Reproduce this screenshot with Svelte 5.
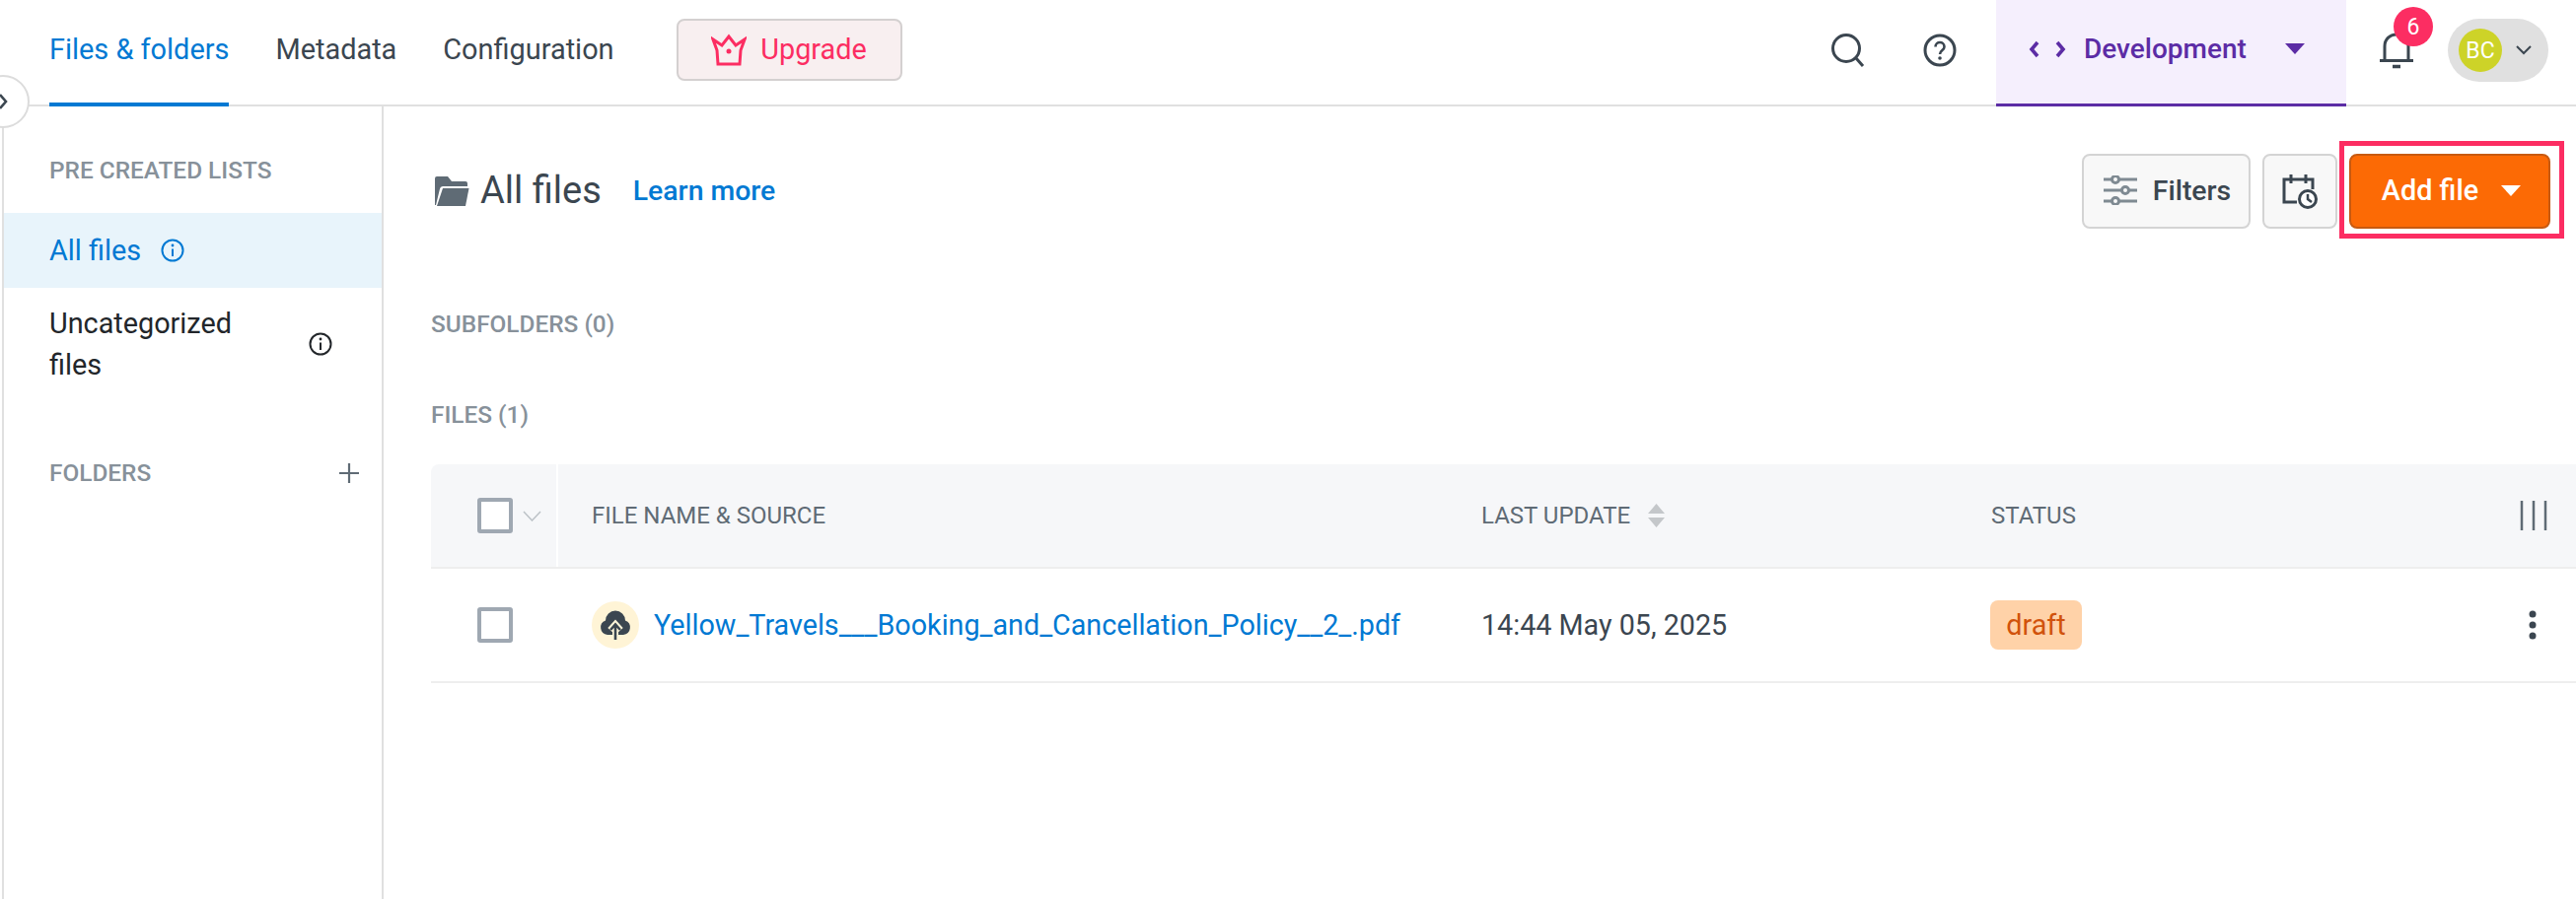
<script>
    const tabs = ["Files & folders", "Metadata", "Configuration"];
</script>

<div class="page">
    <button class="collapse" aria-label="collapse">
        <svg width="12" height="18" viewBox="0 0 12 18"><path d="M3 2l6 7-6 7" fill="none" stroke="#3b4650" stroke-width="2.6"/></svg>
    </button>

    <header class="topbar">
        <nav class="tabs">
            {#each tabs as tab, i}
                <div class="tab" class:active={i === 0}>{tab}</div>
            {/each}
        </nav>
        <button class="upgrade">
            <svg width="36" height="33" viewBox="0 0 36 33" fill="none" stroke="#fc2d62" stroke-width="3">
                <path d="M7 31L6 17 2 6l9 6 7-9 7 9 9-6-4 11-1 14z"/>
                <circle cx="18" cy="18" r="2.5" fill="#fc2d62" stroke="none"/>
            </svg>
            Upgrade
        </button>

        <div class="right">
            <svg class="search" width="36" height="36" viewBox="0 0 36 36" fill="none" stroke="#3b4650" stroke-width="3">
                <circle cx="16" cy="16" r="13.5"/><path d="M26 26l7 8"/>
            </svg>
            <svg class="help" width="34" height="34" viewBox="0 0 34 34" fill="none" stroke="#3b4650" stroke-width="3">
                <circle cx="17" cy="17" r="15"/>
                <path d="M12.5 13.5c0-6 9-6 9 0 0 3.500-4.500 3.500-4.500 7.500" stroke-width="2.6"/>
                <circle cx="17" cy="25" r="1.800" fill="#3b4650" stroke="none"/>
            </svg>
            <div class="env">
                <svg class="code" width="38" height="20" viewBox="0 0 38 20" fill="none" stroke="#5c2ca5" stroke-width="3.600">
                    <path d="M9 3l-6 7 6 7M29 3l6 7-6 7"/>
                </svg>
                <span class="env-name">Development</span>
                <span class="caret purple"></span>
            </div>
            <div class="bell">
                <svg width="36" height="42" viewBox="0 0 36 42" fill="none" stroke="#3b4650" stroke-width="3">
                    <path d="M6 29V15C6 8 11 3 18 3s12 5 12 12v14M1 29.500h34"/>
                    <path d="M14 35.500h8" stroke-width="3.500"/>
                </svg>
                <span class="badge">6</span>
            </div>
            <div class="user">
                <span class="avatar">BC</span>
                <svg width="16" height="10" viewBox="0 0 16 10" fill="none" stroke="#3b4650" stroke-width="2"><path d="M1 1l7 7 7-7"/></svg>
            </div>
        </div>
    </header>

    <div class="body">
        <aside class="sidebar">
            <div class="side-label first">PRE CREATED LISTS</div>
            <div class="side-item selected">
                <span>All files</span>
                <svg class="info" width="24" height="24" viewBox="0 0 24 24" fill="none" stroke="#0079d3" stroke-width="2">
                    <circle cx="12" cy="12" r="10.500"/><path d="M12 10.500V18"/><circle cx="12" cy="7" r="1.400" fill="#0079d3" stroke="none"/>
                </svg>
            </div>
            <div class="side-item two-line">
                <span class="wrap">Uncategorized files</span>
                <svg class="info" width="24" height="24" viewBox="0 0 24 24" fill="none" stroke="#22262a" stroke-width="2">
                    <circle cx="12" cy="12" r="10.500"/><path d="M12 10.500V18"/><circle cx="12" cy="7" r="1.400" fill="#22262a" stroke="none"/>
                </svg>
            </div>
            <div class="side-label folders">
                <span>FOLDERS</span>
                <svg width="20" height="20" viewBox="0 0 20 20" stroke="#5f6b75" stroke-width="2.200"><path d="M10 0v20M0 10h20"/></svg>
            </div>
        </aside>

        <main class="content">
            <div class="title-row">
                <svg class="folder" width="36" height="30" viewBox="0 0 36 30">
                    <path d="M1 2a2 2 0 0 1 2-2h11l4 5h14a2 2 0 0 1 2 2v3H9a3 3 0 0 0-3 2.500L2 29H1z" fill="#5f6b75"/>
                    <path d="M9 12h26.500L32 30H3z" fill="#5f6b75"/>
                </svg>
                <h1>All files</h1>
                <a class="learn" href="#top">Learn more</a>
                <div class="actions">
                    <button class="ghost filters">
                        <svg width="34" height="30" viewBox="0 0 34 30" fill="none" stroke="#7f8a92" stroke-width="3">
                            <path d="M0 4h8M16 4h18M0 15h18M26 15h8M0 26h8M16 26h18"/>
                            <circle cx="12" cy="4" r="3.500"/><circle cx="22" cy="15" r="3.500"/><circle cx="12" cy="26" r="3.500"/>
                        </svg>
                        Filters
                    </button>
                    <button class="ghost cal" aria-label="schedule">
                        <svg width="36" height="36" viewBox="0 0 36 36" fill="none" stroke="#3b4650" stroke-width="3">
                            <path d="M15 29H2V6h29v10M9 1v9M24 1v9"/>
                            <circle cx="26" cy="26" r="8.500" fill="#fff"/>
                            <path d="M26 21v5l4 3" stroke-width="2.500"/>
                        </svg>
                    </button>
                    <div class="highlight">
                        <button class="add">Add file <span class="caret white"></span></button>
                    </div>
                </div>
            </div>

            <div class="section sub">SUBFOLDERS (0)</div>
            <div class="section files">FILES (1)</div>

            <div class="table">
                <div class="row head">
                    <div class="c-check">
                        <span class="box"></span>
                        <svg width="19" height="11" viewBox="0 0 19 11" fill="none" stroke="#bcc2c7" stroke-width="1.500"><path d="M1 1l8.500 9L18 1"/></svg>
                    </div>
                    <div class="c-name">FILE NAME &amp; SOURCE</div>
                    <div class="c-date">
                        LAST UPDATE
                        <svg class="sort" width="17" height="24" viewBox="0 0 17 24" fill="#c4c7ca"><path d="M8.500 0L17 10H0zM0 14h17l-8.500 10z"/></svg>
                    </div>
                    <div class="c-status">STATUS</div>
                    <div class="c-more">
                        <svg width="28" height="30" viewBox="0 0 28 30" stroke="#5f6b75" stroke-width="2.500"><path d="M2 0v30M14 0v30M26 0v30"/></svg>
                    </div>
                </div>
                <div class="row item">
                    <div class="c-check"><span class="box"></span></div>
                    <div class="c-name">
                        <span class="source">
                            <svg width="32" height="30" viewBox="0 0 32 30">
                                <path d="M8 25a7.500 7.500 0 0 1-2-14.500 10 10 0 0 1 20 0A7.500 7.500 0 0 1 24 25z" fill="#3b4650"/>
                                <path d="M16 29V15M10.500 20l5.500-6 5.500 6" fill="none" stroke="#fff7da" stroke-width="6"/>
                                <path d="M16 30V15M11 20l5-5.500 5 5.500" fill="none" stroke="#3b4650" stroke-width="2.600"/>
                            </svg>
                        </span>
                        <a class="file" href="#top">Yellow_Travels___Booking_and_Cancellation_Policy__2_.pdf</a>
                    </div>
                    <div class="c-date text">14:44 May 05, 2025</div>
                    <div class="c-status"><span class="draft">draft</span></div>
                    <div class="c-more">
                        <svg class="dots" width="8" height="30" viewBox="0 0 8 30" fill="#3b4650"><circle cx="4" cy="4" r="3.500"/><circle cx="4" cy="15" r="3.500"/><circle cx="4" cy="26" r="3.500"/></svg>
                    </div>
                </div>
            </div>
        </main>
    </div>
</div>

<style>
    :global(body) {
        margin: 0;
        background: #fff;
    }

    .page {
        position: relative;
        width: 2612px;
        height: 912px;
        overflow: hidden;
        font-family: Roboto, sans-serif;
        color: #3b4650;
        background: #fff;
    }

    button {
        font-family: inherit;
        cursor: pointer;
    }

    .collapse {
        position: absolute;
        left: -24px;
        top: 76px;
        width: 54px;
        height: 54px;
        border-radius: 50%;
        border: 2px solid #dcdcdc;
        background: #fff;
        padding: 0;
        display: flex;
        align-items: center;
        justify-content: center;
        z-index: 2;
    }

    .topbar {
        height: 106px;
        border-bottom: 2px solid #e0e0e0;
        display: flex;
        align-items: center;
        padding-left: 50px;
    }

    .tabs {
        display: flex;
        align-items: flex-start;
        gap: 47px;
        height: 100%;
    }

    .tab {
        font-size: 28.900px;
        line-height: 100px;
        height: 108px;
        white-space: nowrap;
        box-sizing: border-box;
    }

    .tab.active {
        color: #0079d3;
        border-bottom: 4px solid #0079d3;
    }

    .upgrade {
        flex-shrink: 0;
        margin-left: 63px;
        margin-bottom: 6px;
        width: 229px;
        height: 63px;
        display: flex;
        align-items: center;
        justify-content: center;
        gap: 14px;
        background: #f8eff0;
        border: 2px solid #d4d0d0;
        border-radius: 8px;
        color: #fc2d62;
        font-size: 28.800px;
        padding: 0;
    }

    .right {
        margin-left: auto;
        display: flex;
        align-items: stretch;
        height: 106px;
        width: 756px;
    }

    .search {
        margin: 33px 0 0 0;
    }

    .help {
        margin: 34px 0 0 58px;
    }

    .env {
        margin-left: 40px;
        width: 355px;
        height: 108px;
        flex-shrink: 0;
        box-sizing: border-box;
        background: #f5effd;
        border-bottom: 3px solid #5c2ca5;
        display: flex;
        align-items: center;
        padding: 0 0 6px 33px;
        color: #5c2ca5;
    }

    .env-name {
        margin-left: 18px;
        font-size: 28px;
        font-weight: 500;
    }

    .caret {
        width: 0;
        height: 0;
        border-left: 10px solid transparent;
        border-right: 10px solid transparent;
    }

    .caret.purple {
        margin-left: 39px;
        border-top: 11px solid #5c2ca5;
    }

    .caret.white {
        margin-left: 23px;
        border-top: 11px solid #fff;
    }

    .bell {
        position: relative;
        margin: 32px 0 0 33px;
        width: 36px;
    }

    .badge {
        position: absolute;
        left: 15px;
        top: -25px;
        width: 40px;
        height: 40px;
        border-radius: 50%;
        background: #fc2d62;
        color: #fff;
        font-size: 23px;
        display: flex;
        align-items: center;
        justify-content: center;
    }

    .user {
        margin: 19px 0 0 34px;
        width: 102px;
        height: 64px;
        border-radius: 32px;
        background: #e0e0e0;
        display: flex;
        align-items: center;
        padding-left: 11px;
        gap: 14px;
        box-sizing: border-box;
    }

    .avatar {
        width: 44px;
        height: 44px;
        border-radius: 50%;
        background: #cdd328;
        color: #fff;
        font-size: 23px;
        display: flex;
        align-items: center;
        justify-content: center;
    }

    .body {
        display: flex;
        height: 804px;
    }

    .sidebar {
        width: 387px;
        margin-left: 2px;
        border-left: 2px solid #e0e0e0;
        border-right: 2px solid #e0e0e0;
        box-sizing: border-box;
        flex-shrink: 0;
    }

    .side-label {
        font-size: 24.400px;
        font-weight: 500;
        color: #87919a;
        padding-left: 46px;
    }

    .side-label.first {
        padding-top: 51px;
        line-height: 28px;
        height: 108px;
        box-sizing: border-box;
    }

    .side-label.folders {
        margin-top: 63px;
        display: flex;
        align-items: center;
        justify-content: space-between;
        padding-right: 23px;
        line-height: 28px;
    }

    .side-item {
        display: flex;
        align-items: center;
        padding-left: 46px;
        font-size: 28.800px;
        color: #22262a;
    }

    .side-item.selected {
        height: 76px;
        background: #e8f4fb;
        color: #0079d3;
        gap: 20px;
    }

    .side-item.two-line {
        height: 108px;
        margin-top: 3px;
        padding-right: 50px;
        justify-content: space-between;
        line-height: 42px;
    }

    .wrap {
        width: 220px;
    }

    .content {
        flex: 1;
        min-width: 0;
        padding-left: 48px;
    }

    .title-row {
        display: flex;
        align-items: center;
        height: 76px;
        margin-top: 48px;
    }

    .folder {
        margin: 0 11px 0 3px;
    }

    h1 {
        margin: 0;
        padding-bottom: 2px;
        font-size: 38px;
        font-weight: 400;
    }

    .learn {
        margin-left: 32px;
        padding-bottom: 2px;
        color: #0079d3;
        font-size: 28.400px;
        font-weight: 500;
        text-decoration: none;
    }

    .actions {
        margin-left: auto;
        margin-right: 12px;
        display: flex;
        align-items: center;
    }

    .ghost {
        height: 76px;
        background: #f8f8f8;
        border: 2px solid #d4d4d4;
        border-radius: 8px;
        color: #3b4650;
        display: flex;
        align-items: center;
        justify-content: center;
    }

    .filters {
        width: 171px;
        gap: 16px;
        font-size: 28.400px;
        font-weight: 500;
        margin-right: 12px;
        padding: 0 0 2px 2px;
    }

    .cal {
        width: 76px;
        padding: 0;
    }

    .highlight {
        margin-left: 2px;
        padding: 3px 0 0 5px;
        border: 5px solid #fc2d62;
        height: 99px;
        box-sizing: border-box;
        width: 228px;
        margin-top: -3px;
        display: flex;
        align-items: center;
    }

    .add {
        width: 204px;
        height: 76px;
        flex-shrink: 0;
        background: #fc6a05;
        border: 2px solid #c85a10;
        border-radius: 8px;
        color: #fff;
        font-size: 28.800px;
        font-weight: 500;
        padding: 0 0 2px 3px;
        display: flex;
        align-items: center;
        justify-content: center;
    }

    .section {
        font-size: 24.400px;
        font-weight: 500;
        color: #87919a;
        line-height: 28px;
    }

    .section.sub {
        margin-top: 83px;
    }

    .section.files {
        margin-top: 64px;
    }

    .table {
        margin-top: 36px;
        width: 2200px;
    }

    .row {
        display: flex;
        align-items: center;
    }

    .row.head {
        height: 106px;
        background: #f6f7f9;
        border-bottom: 2px solid #eeeeee;
        border-radius: 8px 0 0 0;
        font-size: 24px;
        color: #5f6b75;
        box-sizing: border-box;
    }

    .row.item {
        height: 116px;
        border-bottom: 2px solid #eeeeee;
        box-sizing: border-box;
    }

    .c-check {
        width: 129px;
        height: 100%;
        box-sizing: border-box;
        border-right: 2px solid #fff;
        padding-left: 47px;
        display: flex;
        align-items: center;
        gap: 10px;
        flex-shrink: 0;
    }

    .box {
        width: 36px;
        height: 36px;
        box-sizing: border-box;
        background: #fff;
        border: 4px solid #9fa8b2;
        border-radius: 3px;
        flex-shrink: 0;
    }

    .c-name {
        width: 936px;
        padding-left: 34px;
        box-sizing: border-box;
        display: flex;
        align-items: center;
        flex-shrink: 0;
    }

    .source {
        width: 48px;
        height: 48px;
        border-radius: 50%;
        background: #fff4d6;
        display: flex;
        align-items: center;
        justify-content: center;
        margin-right: 15px;
    }

    .file {
        color: #0079d3;
        font-size: 28.700px;
        text-decoration: none;
        white-space: nowrap;
    }

    .c-date {
        width: 517px;
        display: flex;
        align-items: center;
        gap: 18px;
        flex-shrink: 0;
    }

    .c-date.text {
        font-size: 28.700px;
    }

    .c-status {
        width: 536px;
        flex-shrink: 0;
    }

    .draft {
        display: inline-flex;
        align-items: center;
        justify-content: center;
        width: 93px;
        height: 50px;
        margin-left: -1px;
        background: #ffd2a8;
        color: #d1520c;
        border-radius: 8px;
        font-size: 28.800px;
    }

    .c-more {
        width: 28px;
        display: flex;
        justify-content: center;
        flex-shrink: 0;
    }

    .dots {
        margin-right: 2px;
    }
</style>
